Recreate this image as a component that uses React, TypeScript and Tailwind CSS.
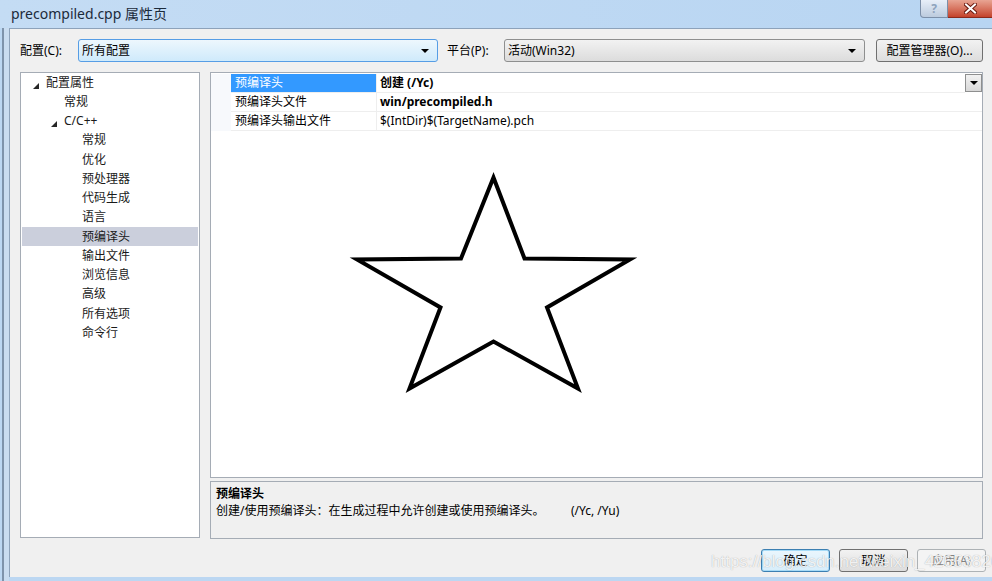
import { ReactNode } from "react";

const font = "font-['Noto_Sans','Noto_Sans_CJK_SC',sans-serif]";

const treeItems: { label: string; indent: number; expand?: boolean; selected?: boolean }[] = [
  { label: "配置属性", indent: 0, expand: true },
  { label: "常规", indent: 1 },
  { label: "C/C++", indent: 1, expand: true },
  { label: "常规", indent: 2 },
  { label: "优化", indent: 2 },
  { label: "预处理器", indent: 2 },
  { label: "代码生成", indent: 2 },
  { label: "语言", indent: 2 },
  { label: "预编译头", indent: 2, selected: true },
  { label: "输出文件", indent: 2 },
  { label: "浏览信息", indent: 2 },
  { label: "高级", indent: 2 },
  { label: "所有选项", indent: 2 },
  { label: "命令行", indent: 2 },
];

const props = [
  { name: "预编译头", value: "创建 (/Yc)", bold: true, selected: true },
  { name: "预编译头文件", value: "win/precompiled.h", bold: true },
  { name: "预编译头输出文件", value: "$(IntDir)$(TargetName).pch" },
];

function Arrow() {
  return <span className="w-0 h-0 border-l-[4px] border-r-[4px] border-t-[4px] border-l-transparent border-r-transparent border-t-black" />;
}

function Combo({ text, width, focused }: { text: string; width: string; focused?: boolean }) {
  return (
    <div
      className={`${width} h-[23px] rounded-[3px] border flex items-center justify-between pl-[3px] pr-[8px] ${
        focused
          ? "border-[#569de5] bg-gradient-to-b from-[#edf7fd] to-[#cfeafb]"
          : "border-[#8e8f8f] bg-gradient-to-b from-[#f2f2f2] to-[#dcdcdc]"
      }`}
    >
      <span>{text}</span>
      <Arrow />
    </div>
  );
}

function Btn({ children, focused, disabled }: { children: ReactNode; focused?: boolean; disabled?: boolean }) {
  return (
    <div
      className={`w-[69px] h-[23px] rounded-[3px] border flex items-center justify-center ${
        focused
          ? "border-[#3c7fb1] bg-gradient-to-b from-[#eaf6fd] to-[#d7eefb] shadow-[inset_0_0_0_1px_#a6dbf7]"
          : disabled
          ? "border-[#adb2b5] bg-[#f4f4f4] text-[#838383]"
          : "border-[#707070] bg-gradient-to-b from-[#f2f2f2] to-[#dddddd]"
      }`}
    >
      {children}
    </div>
  );
}

export default function App() {
  return (
    <div className={`relative w-[992px] h-[581px] overflow-hidden bg-[#bcd7f2] flex flex-col text-[12px] text-black ${font}`}>
      {/* title bar */}
      <div className="h-[28px] flex items-start shrink-0 bg-gradient-to-r from-[#c4dcf4] to-[#b8d5f2]">
        <span className="pl-[11px] pt-[3px] text-[14px] text-[#1b2a3a]">precompiled.cpp 属性页</span>
        <div className="ml-auto flex">
          <div className="w-[28px] h-[18px] rounded-bl-[4px] border border-t-0 border-[#7c8fa8] bg-gradient-to-b from-[#e8eff8] to-[#bccbde] flex items-center justify-center text-[12px] font-bold text-[#8ea3bd]">
            ?
          </div>
          <div className="w-[44px] h-[18px] border-b border-[#8a2a1d] bg-gradient-to-b from-[#e8a493] to-[#c3412b] flex items-center justify-center">
            <svg width="13" height="11" viewBox="0 0 13 11">
              <path d="M2 1.5 L11 9.5 M11 1.5 L2 9.5" stroke="#6b1a10" strokeWidth="4" strokeLinecap="square" />
              <path d="M2 1.5 L11 9.5 M11 1.5 L2 9.5" stroke="#fff" strokeWidth="2" strokeLinecap="square" />
            </svg>
          </div>
        </div>
      </div>

      {/* window body */}
      <div className="flex-1 flex ml-[2px] border-l-[2px] border-[#7e93ab]">
        <div className="w-[6px] bg-[#c9dcf0]" />
        <div className="flex-1 mb-[4px] bg-[#f0f0f0] border-l border-t border-[#8da2ba] pl-[10px] pr-[9px] pt-[10px] flex flex-col">
          {/* config row */}
          <div className="flex items-center h-[23px]">
            <span className="w-[58px]">配置(C):</span>
            <Combo text="所有配置" width="w-[360px]" focused />
            <span className="ml-[9px] w-[57px]">平台(P):</span>
            <Combo text="活动(Win32)" width="w-[361px]" />
            <div className="ml-[11px] w-[107px] h-[23px] rounded-[3px] border border-[#707070] bg-gradient-to-b from-[#f2f2f2] to-[#dddddd] flex items-center justify-center">
              配置管理器(O)...
            </div>
          </div>

          {/* main area */}
          <div className="flex mt-[10px] gap-[10px]">
            {/* tree */}
            <div className="w-[180px] h-[466px] border border-[#a5acb5] bg-white px-[1px]">
              {treeItems.map((it, i) => (
                <div
                  key={i}
                  className={`h-[19.25px] flex items-center ${it.selected ? "bg-[#cbcfdc]" : ""}`}
                  style={{ paddingLeft: 11 + it.indent * 18 }}
                >
                  <span className="w-[13px] flex items-center">
                    {it.expand && (
                      <span className="w-0 h-0 border-l-[6px] border-t-[6px] border-l-transparent border-t-transparent border-b-0 border-r-0 border-[#262626] [border-right-width:0] [border-bottom-width:6px] [border-right-style:solid] [border-bottom-style:solid] [border-bottom-color:#262626]" />
                    )}
                  </span>
                  <span className="ml-[7px] -translate-x-[7px] text-[#1a1a1a]">{it.label}</span>
                </div>
              ))}
            </div>

            <div className="flex-1 flex flex-col gap-[3px]">
              {/* property grid */}
              <div className="h-[406px] border border-[#a5acb5] bg-white flex flex-col pt-[1px]">
                {props.map((p, i) => (
                  <div key={i} className="flex h-[19px]">
                    <div className="w-[20px] bg-[#f7f9fc]" />
                    <div
                      className={`w-[146px] flex items-center pl-[4px] border-b border-r border-[#eeeeee] ${
                        p.selected ? "bg-[#3399ff] text-white" : ""
                      }`}
                    >
                      {p.name}
                    </div>
                    <div className={`flex-1 flex items-center pl-[3px] border-b border-[#eeeeee] ${p.bold ? "font-bold" : ""}`}>
                      {p.value}
                    </div>
                    {p.selected && (
                      <div className="w-[17px] h-[18px] border border-[#8e8f8f] bg-gradient-to-b from-[#f2f2f2] to-[#d8d8d8] flex items-center justify-center">
                        <Arrow />
                      </div>
                    )}
                  </div>
                ))}
              </div>

              {/* description */}
              <div className="h-[58px] border border-[#a5acb5] bg-[#f0f0f0] px-[5px] pt-[3px] leading-[17px]">
                <div className="font-bold">预编译头</div>
                <div className="flex">
                  <span className="w-[355px]">创建/使用预编译头：在生成过程中允许创建或使用预编译头。</span>
                  <span>(/Yc, /Yu)</span>
                </div>
              </div>
            </div>
          </div>

          {/* buttons */}
          <div className="flex justify-end gap-[9px] mt-[10px] -mr-[3px]">
            <Btn focused>确定</Btn>
            <Btn>取消</Btn>
            <Btn disabled>应用(A)</Btn>
          </div>
        </div>
      </div>

      {/* star drawing */}
      <svg className="absolute left-0 top-0 pointer-events-none" width="992" height="581" viewBox="0 0 992 581">
        <polygon
          points="493.5,177.5 524.5,258.5 630,259.5 547,307.5 578,388.5 493.5,341.5 409.5,388.5 440.5,307.5 357,259.5 461,258.5"
          fill="none"
          stroke="#000"
          strokeWidth="4"
          strokeLinejoin="miter"
        />
      </svg>

      {/* watermark */}
      <div className="absolute left-[711px] top-[549px] text-[17px] text-white/85 font-['Liberation_Sans',sans-serif] [text-shadow:0_0_1px_rgba(0,0,0,0.35)] pointer-events-none">
        https://blog.csdn.net/weixin_42653826
      </div>
    </div>
  );
}
